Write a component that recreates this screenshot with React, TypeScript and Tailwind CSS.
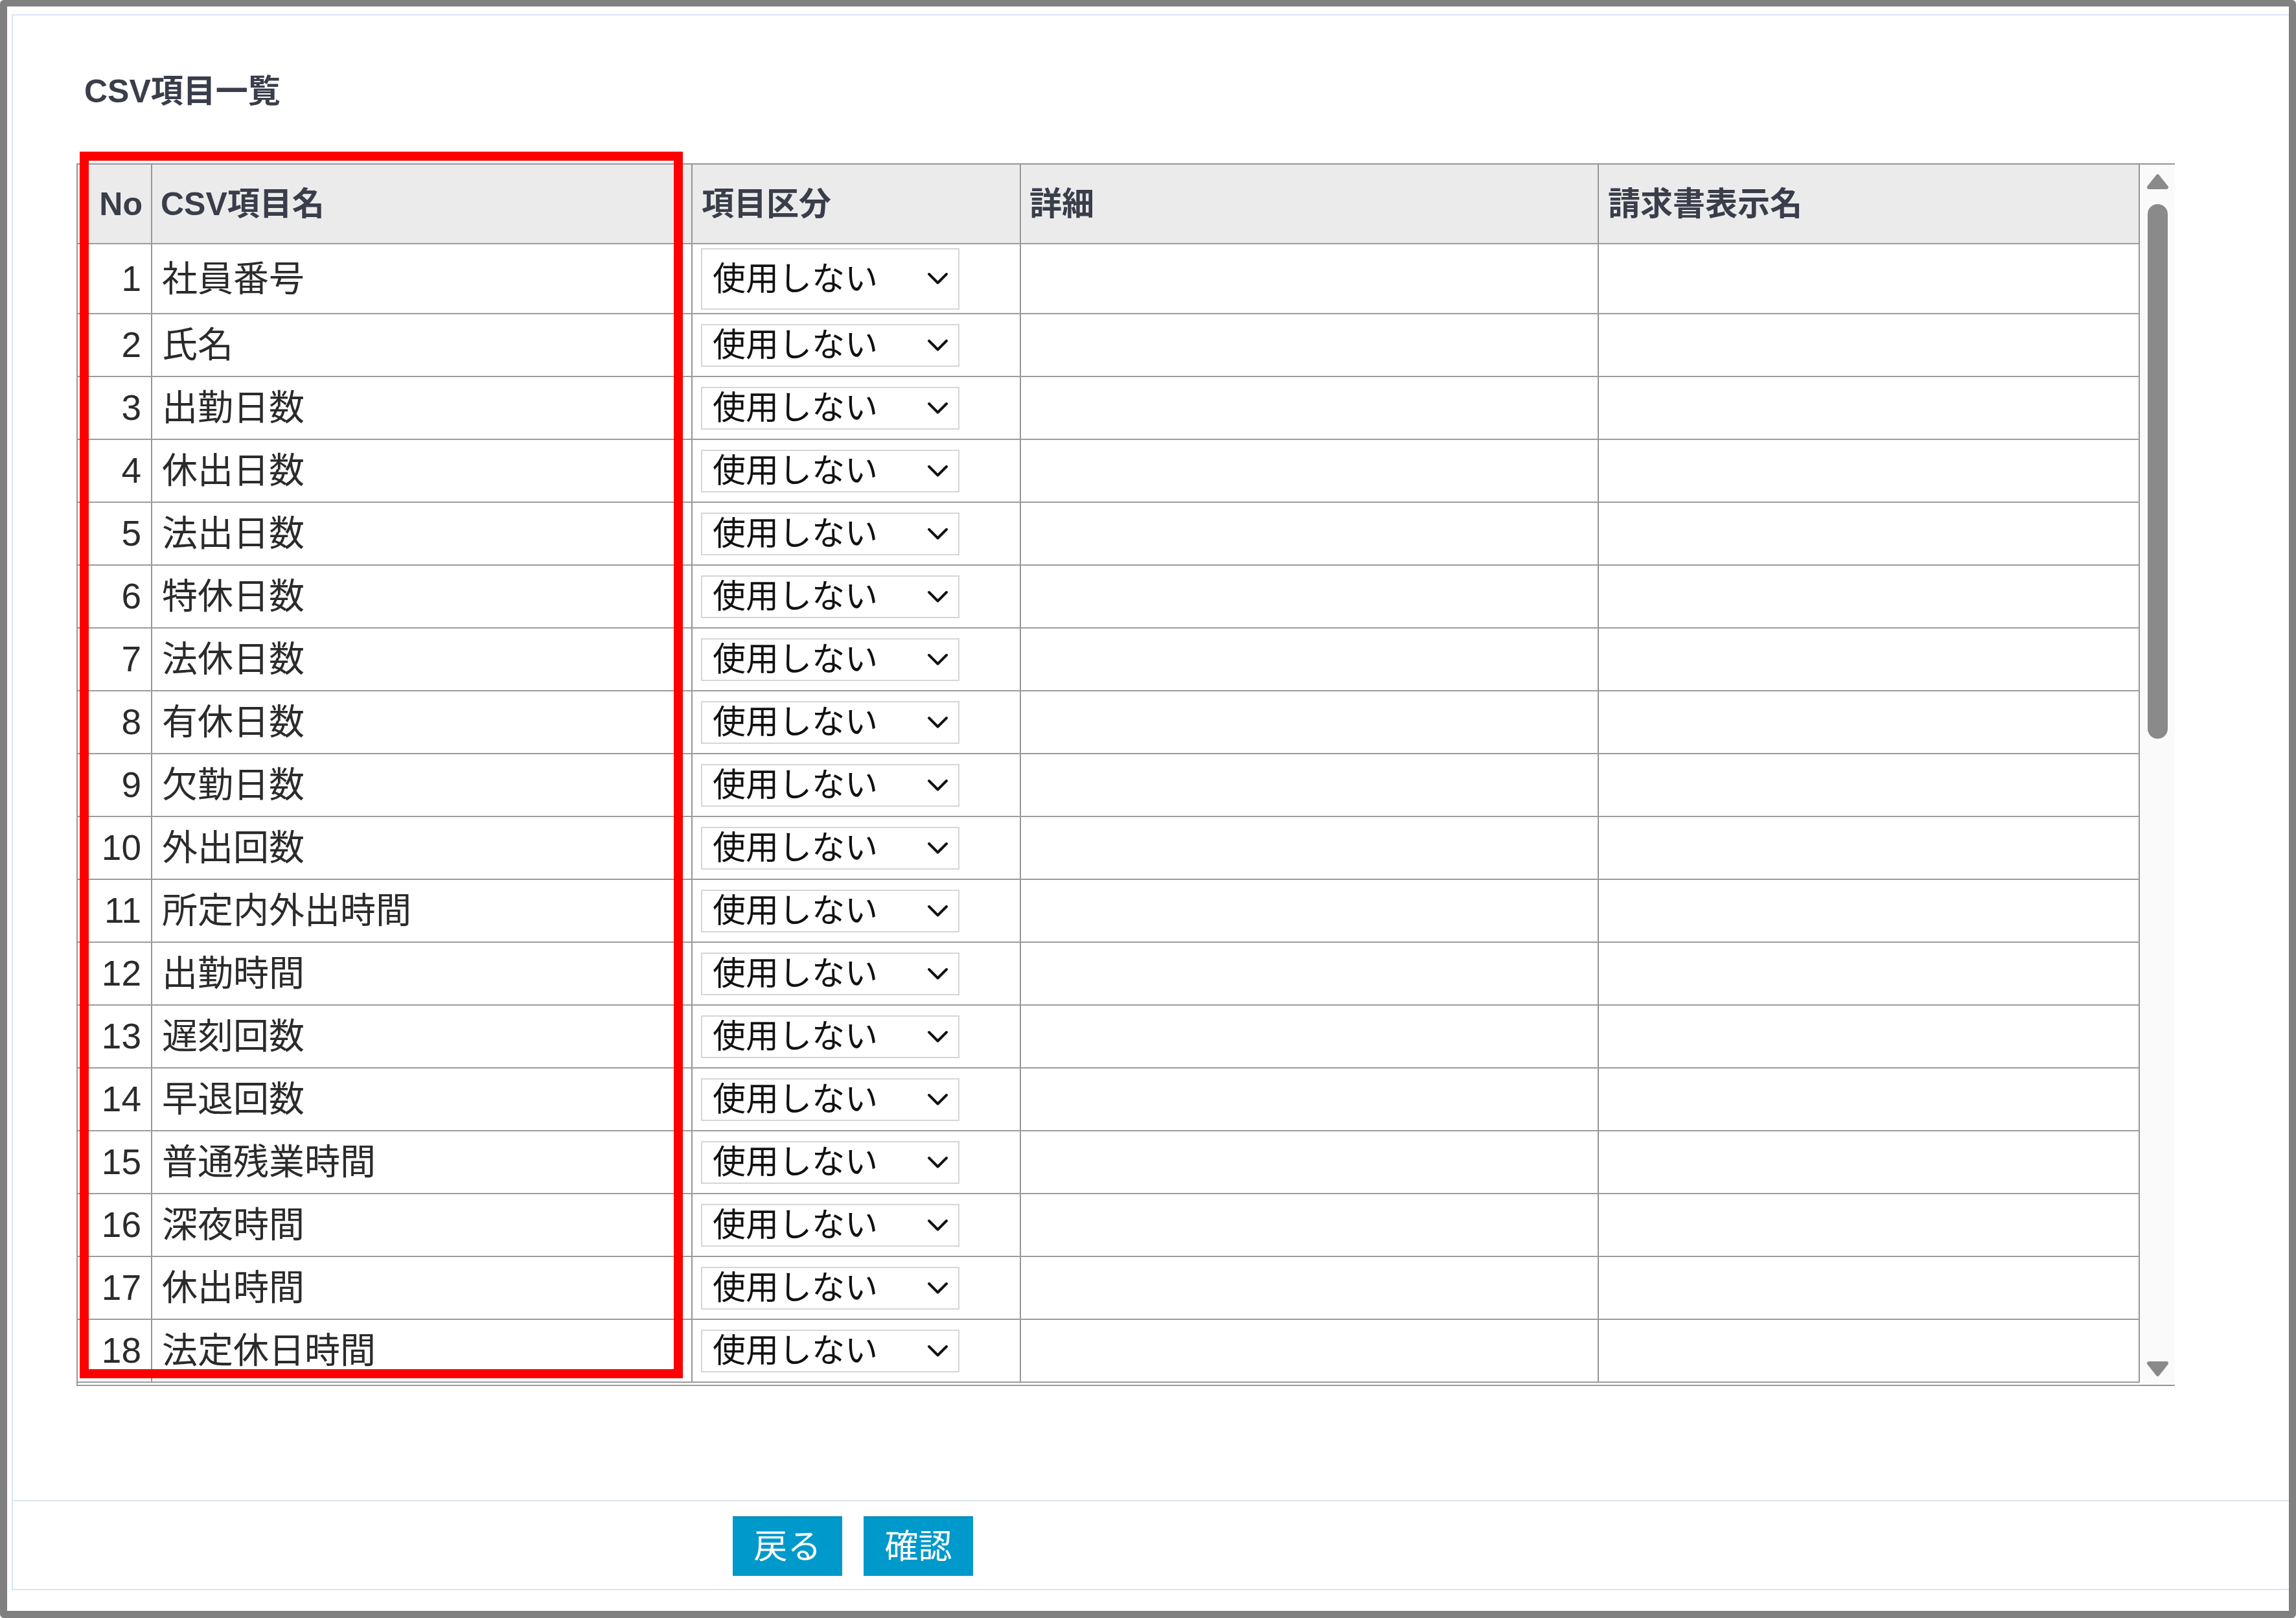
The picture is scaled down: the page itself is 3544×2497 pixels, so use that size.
import React from "react";

const items = [
  "社員番号",
  "氏名",
  "出勤日数",
  "休出日数",
  "法出日数",
  "特休日数",
  "法休日数",
  "有休日数",
  "欠勤日数",
  "外出回数",
  "所定内外出時間",
  "出勤時間",
  "遅刻回数",
  "早退回数",
  "普通残業時間",
  "深夜時間",
  "休出時間",
  "法定休日時間",
];

const cols = "grid grid-cols-[115px_834px_507px_892px_835px]";
const cell = "border-r-2 border-[#969696] flex items-center";

function Chevron() {
  return (
    <svg width="33" height="20" viewBox="0 0 33 20" fill="none">
      <polyline points="3,3 16.5,16.5 30,3" stroke="#111" strokeWidth="4" strokeLinecap="round" strokeLinejoin="round" />
    </svg>
  );
}

function Select({ tall }: { tall?: boolean }) {
  return (
    <div
      className={`ml-[13px] w-[399px] ${tall ? "h-[95px]" : "h-[66px]"} border-2 border-[#d6d6d6] bg-white flex items-center justify-between pl-[16px] pr-[15px] text-[51px] leading-none text-[#111]`}
    >
      <span>使用しない</span>
      <Chevron />
    </div>
  );
}

function Triangle({ down }: { down?: boolean }) {
  return (
    <svg width="35" height="25" viewBox="0 0 35 25">
      <polygon
        points={down ? "4,4 31,4 17.5,21" : "17.5,4 31,21 4,21"}
        fill="#8a8a8a"
        stroke="#8a8a8a"
        strokeWidth="6"
        strokeLinejoin="round"
      />
    </svg>
  );
}

export default function App() {
  return (
    <div className="relative w-[3544px] h-[2497px] bg-white border-[#808080] border-t-[10px] border-l-[11px] border-r-[11px] border-b-[11px] rounded-[6px] pl-[7px] pt-[12px] font-['Liberation_Sans','Noto_Sans_CJK_JP',sans-serif]">
      <div className="h-[2432px] flex flex-col border-l-2 border-t-2 border-b-2 border-[#d5e7f7]">
        <h1 className="ml-[110px] mt-[92px] h-[50px] text-[50px] leading-[50px] font-bold text-[#3a3d4a]">
          CSV項目一覧
        </h1>

        {/* table */}
        <div className="ml-[98px] mt-[86px] flex w-[3239px] border-t-2 border-[#969696]">
          <div className="w-[3185px] border-l-2 border-[#969696]">
            <div className={`${cols} h-[123px] bg-[#ebebeb] border-b-2 border-[#9c9c9c] text-[50px] font-bold text-[#3a3d4a] leading-none`}>
              <div className={`${cell} justify-end pr-[13px]`}>No</div>
              <div className={`${cell} pl-[13px]`}>CSV項目名</div>
              <div className={`${cell} pl-[14px]`}>項目区分</div>
              <div className={`${cell} pl-[13px]`}>詳細</div>
              <div className={`${cell} pl-[14px]`}>請求書表示名</div>
            </div>
            <div className="h-[1755px] overflow-hidden">
              {items.map((name, i) => (
                <div
                  key={name}
                  className={`${cols} ${i === 0 ? "h-[108px]" : "h-[97px]"} border-b-2 border-[#9c9c9c] text-[55px] leading-none text-[#2b2b2b]`}
                >
                  <div className={`${cell} justify-end pr-[15px]`}>{i + 1}</div>
                  <div className={`${cell} pl-[15px]`}>{name}</div>
                  <div className={cell}>
                    <Select tall={i === 0} />
                  </div>
                  <div className={cell}></div>
                  <div className={cell}></div>
                </div>
              ))}
            </div>
            <div className="h-[7px] border-t-2 border-b-2 border-[#9c9c9c]"></div>
          </div>

          {/* scrollbar */}
          <div className="w-[54px] bg-[#fafafa] flex flex-col items-center border-b-2 border-[#969696]">
            <div className="mt-[14px]">
              <Triangle />
            </div>
            <div className="mt-[22px] w-[31px] h-[825px] rounded-full bg-[#8a8a8a]"></div>
            <div className="flex-1"></div>
            <div className="mb-[12px]">
              <Triangle down />
            </div>
          </div>
        </div>

        <div className="flex-1"></div>

        {/* footer */}
        <div className="h-[137px] border-t-2 border-[#d5e7f7] pt-[23px] pl-[1111px] flex gap-[33px]">
          <button className="w-[169px] h-[92px] bg-[#0099cc] border-t-2 border-[#0088bb] text-white text-[52px] leading-none">
            戻る
          </button>
          <button className="w-[169px] h-[92px] bg-[#0099cc] border-t-2 border-[#0088bb] text-white text-[52px] leading-none">
            確認
          </button>
        </div>
      </div>

      {/* annotation */}
      <div className="absolute left-[112px] top-[224px] w-[931px] h-[1893px] border-[14px] border-[#ff0000] pointer-events-none"></div>
    </div>
  );
}
